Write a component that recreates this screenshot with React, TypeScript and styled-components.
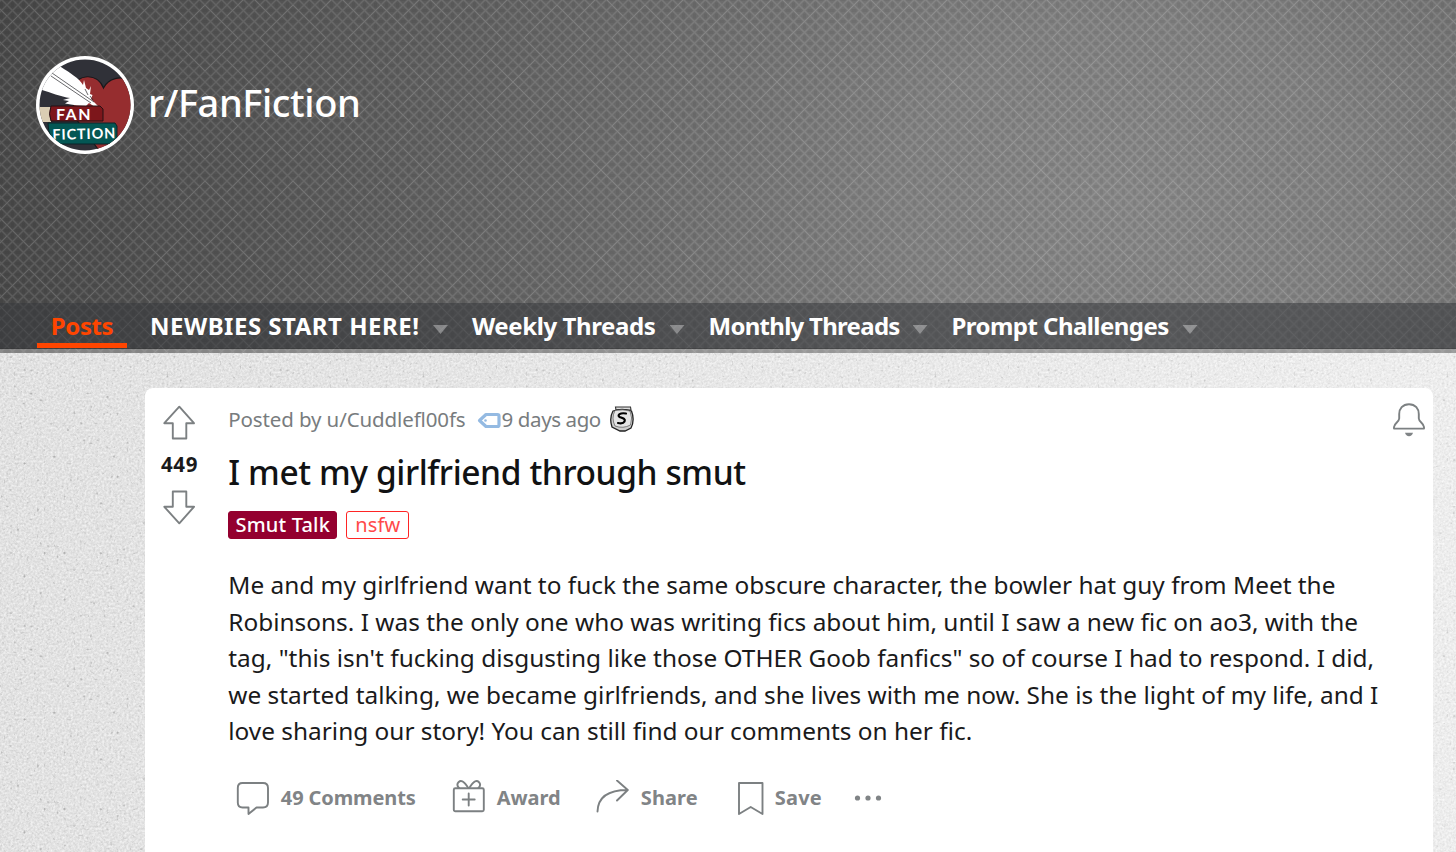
import styled, { createGlobalStyle } from 'styled-components'

const svgUrl = (svg: string) => `url("data:image/svg+xml,${encodeURIComponent(svg)}")`

const hatch = svgUrl(
  `<svg xmlns='http://www.w3.org/2000/svg' width='88' height='88'>
    <defs><pattern id='p' width='11' height='11' patternUnits='userSpaceOnUse'>
      <path d='M-1 -1L12 12M12 -1L-1 12' stroke='#fff' stroke-opacity='.1' stroke-width='1.4'/>
      <path d='M5.5 2.5V0M5.5 8.500V11M2.500 5.500H0M8.500 5.500H11' stroke='#000' stroke-opacity='.05' stroke-width='3'/>
    </pattern></defs>
    <rect width='88' height='88' fill='url(#p)'/>
    <path d='M22 22L66 66M66 22L22 66M0 33L33 0M55 88L88 55M0 55L33 88M55 0L88 33' stroke='#fff' stroke-opacity='.07'/>
  </svg>`
)

const grain = svgUrl(
  `<svg xmlns='http://www.w3.org/2000/svg' width='256' height='256'>
    <filter id='n' x='0' y='0' width='100%' height='100%' color-interpolation-filters='sRGB'>
      <feTurbulence type='fractalNoise' baseFrequency='.45' numOctaves='2' stitchTiles='stitch'/>
      <feColorMatrix values='.2 0 0 0 .8 .2 0 0 0 .8 .2 0 0 0 .8 0 0 0 0 1'/>
    </filter>
    <filter id='d' x='0' y='0' width='100%' height='100%' color-interpolation-filters='sRGB'>
      <feTurbulence type='fractalNoise' baseFrequency='.3' numOctaves='1' seed='7' stitchTiles='stitch'/>
      <feColorMatrix values='0 0 0 0 .5 0 0 0 0 .5 0 0 0 0 .5 0 6 0 0 -4'/>
    </filter>
    <rect width='256' height='256' filter='url(#n)'/>
    <rect width='256' height='256' filter='url(#d)' opacity='.5'/>
  </svg>`
)

const GlobalStyle = createGlobalStyle`
  * { box-sizing: border-box; }
  body {
    margin: 0;
    overflow: hidden;
    font-family: 'Noto Sans', sans-serif;
  }
  svg { display: block; flex: none; }
`

const Page = styled.div`
  height: 852px;
  overflow: hidden;
  display: flex;
  flex-direction: column;
  background: linear-gradient(
      100deg,
      rgba(0, 0, 0, 0.02),
      rgba(255, 255, 255, 0.3) 90%
    ),
    ${grain};
`

const Header = styled.header`
  height: 353px;
  flex: none;
  display: flex;
  flex-direction: column;
  background: ${hatch} 29px 38px,
    radial-gradient(
      1180px 900px at 1130px 200px,
      #858585 0%,
      #7e7e7e 20%,
      #696969 45%,
      #545454 75%,
      #464646 100%
    );
`

const Banner = styled.div`
  height: 303px;
  display: flex;
  align-items: flex-start;
  gap: 14px;
  padding: 56px 36px 0;
`

const Community = styled.h1`
  margin: 0;
  padding-top: 21px;
  color: #fff;
  font-size: 38px;
  font-weight: 500;
  line-height: 50px;
  letter-spacing: -0.4px;
`

const Nav = styled.nav`
  height: 46px;
  display: flex;
  padding-left: 37px;
  background: rgba(55, 57, 60, 0.56);
  border-bottom: 1px solid rgba(50, 50, 50, 0.35);
`

const Strip = styled.div`
  height: 4px;
  background: rgba(190, 190, 190, 0.5);
`

const Tab = styled.a`
  width: 90px;
  height: 45px;
  border-bottom: 5px solid #ff4500;
  color: #ff4500;
  font-size: 24px;
  font-weight: 700;
  line-height: 45px;
  text-align: center;
  letter-spacing: -0.4px;
`

const MenuItem = styled.a<{ $width: number; $spacing: number }>`
  width: ${({ $width }) => $width}px;
  display: flex;
  justify-content: space-between;
  margin-left: 24px;
  color: #fff;
  font-size: 24px;
  font-weight: 700;
  line-height: 45px;
  letter-spacing: ${({ $spacing }) => $spacing}px;
  white-space: nowrap;

  ${Tab} + & {
    margin-left: 23px;
  }
`

const Caret = styled.span`
  width: 15px;
  height: 9px;
  margin-top: 22px;
  background: rgba(255, 255, 255, 0.34);
  clip-path: polygon(0 0, 100% 0, 50% 100%);
`

const Card = styled.article`
  flex: 1;
  display: flex;
  margin: 35px 23px 0 145px;
  background: #fff;
  border-radius: 8px 8px 0 0;
`

const Votes = styled.div`
  width: 68px;
  display: flex;
  flex-direction: column;
  align-items: center;
  padding-top: 17px;
`

const Score = styled.span`
  color: #1a1a1b;
  font-size: 20.5px;
  font-weight: 700;
  line-height: 28px;
  letter-spacing: 0.6px;
  padding-left: 1px;
  margin: 10px 0 12px;
`

const Content = styled.div`
  flex: 1;
  padding: 15px 7px 0 15.3px;
`

const Meta = styled.div`
  height: 32px;
  display: flex;
  color: #787c7e;
  font-size: 20.5px;
  line-height: 32px;
  letter-spacing: -0.12px;
`

const Age = styled.span`
  letter-spacing: -0.4px;
`

const TagIcon = styled.svg`
  margin: 9px 1px 0 11px;
`

const SnooIcon = styled.svg`
  margin: 3px 0 0 9px;
`

const BellIcon = styled.svg`
  margin-left: auto;
`

const Title = styled.h2`
  margin: 17px 0 19px;
  color: #111213;
  font-size: 33.5px;
  font-weight: 500;
  line-height: 40px;
  letter-spacing: -0.4px;
`

const Flairs = styled.div`
  display: flex;
  gap: 9px;
`

const Flair = styled.span<{ $outlined?: boolean }>`
  width: ${({ $outlined }) => ($outlined ? 63 : 109)}px;
  height: 27.5px;
  border: 1.5px solid ${({ $outlined }) => ($outlined ? '#ff2424' : '#94002f')};
  border-radius: 3px;
  background: ${({ $outlined }) => ($outlined ? '#fff' : '#94002f')};
  color: ${({ $outlined }) => ($outlined ? '#ff4a4a' : '#fff')};
  font-size: 20px;
  font-weight: ${({ $outlined }) => ($outlined ? 400 : 500)};
  line-height: 25px;
  text-align: center;
  letter-spacing: ${({ $outlined }) => ($outlined ? 0.1 : 0.15)}px;
`

const Body = styled.p`
  margin: 28.5px 0 30.5px;
  color: #1a1a1b;
  font-size: 24.4px;
  line-height: 36.6px;
  white-space: nowrap;
`

const Actions = styled.div`
  display: flex;
  height: 38px;
  padding-left: 7.5px;
  color: #818486;
`

const Action = styled.button<{ $width: number; $gap: number; $spacing?: number }>`
  width: ${({ $width }) => $width}px;
  display: flex;
  gap: ${({ $gap }) => $gap}px;
  padding: 0;
  border: 0;
  background: none;
  color: inherit;
  font: 700 20px/36px 'Noto Sans', sans-serif;
  letter-spacing: ${({ $spacing = 0 }) => $spacing}px;
  white-space: nowrap;
`

const menus = [
  { text: 'NEWBIES START HERE!', width: 298, spacing: 0.5 },
  { text: 'Weekly Threads', width: 212.5, spacing: -0.4 },
  { text: 'Monthly Threads', width: 219, spacing: -0.72 },
  { text: 'Prompt Challenges', width: 246, spacing: -0.55 }
]

const lines = [
  'Me and my girlfriend want to fuck the same obscure character, the bowler hat guy from Meet the',
  'Robinsons. I was the only one who was writing fics about him, until I saw a new fic on ao3, with the',
  `tag, "this isn't fucking disgusting like those OTHER Goob fanfics" so of course I had to respond. I did,`,
  'we started talking, we became girlfriends, and she lives with me now. She is the light of my life, and I',
  'love sharing our story! You can still find our comments on her fic.'
]

const stroke = {
  fill: 'none',
  stroke: '#7c8082',
  strokeWidth: 1.9,
  strokeLinejoin: 'round' as const,
  strokeLinecap: 'round' as const
}

const Avatar = () => (
  <svg width='98' height='98' viewBox='0 0 98 98'>
    <defs>
      <clipPath id='avatar'>
        <circle cx='49' cy='49' r='45.500' />
      </clipPath>
    </defs>
    <circle cx='49' cy='49' r='49' fill='#fff' />
    <g clipPath='url(#avatar)'>
      <rect width='98' height='98' fill='#303138' />
      <path
        d='M36 32C41 18 61 16 67.5 32C72 23 84 18 98 26V66C88 80 76 84 64 96L38 60Z'
        fill='#962d2f'
        stroke='#18181b'
        strokeWidth='1.2'
      />
      <path
        d='M0 34L4 0L25 11C34 17 43 22 47 29L48 24L50 32L53 34L55 30L54 38L56.500 39L55 43L62 50L59 51L53 47L50 50L41 49.500L29 47.500L33 45L27 44L34 42C25 41 14 36 6 34Z'
        fill='#fff'
      />
      <path
        d='M16 17L58 46M15 20L55 47M49 33L52 39M54 40L57 44'
        fill='none'
        stroke='#28282c'
        strokeWidth='.7'
      />
      <path d='M2 51H15V66H4Z' fill='#dacdb3' />
      <path d='M15 50H64L67 53V65H15Q12 58 15 50Z' fill='#7d161b' stroke='#251014' />
      <path d='M12 67H79L81 70V85L78 88H22Q12 82 12 67Z' fill='#045754' stroke='#0a2528' />
      <g fill='#fff' fontFamily='Lato, sans-serif' fontWeight='700'>
        <text x='20' y='64' fontSize='16' letterSpacing='1.5'>
          FAN
        </text>
        <text x='16.500' y='83' fontSize='14.500' textLength='63' transform='rotate(-1.500 48 83)'>
          FICTION
        </text>
      </g>
    </g>
  </svg>
)

const VoteArrow = ({ down }: { down?: boolean }) => (
  <svg width='34' height='35' viewBox='0 0 34 35'>
    <path
      {...stroke}
      d='M17.300 1.700L32 18.200H24.300V33.500H10.800V18.200H2.300Z'
      transform={down ? 'matrix(1 0 0 -1 0 35)' : undefined}
    />
  </svg>
)

export default function App() {
  return (
    <Page>
      <GlobalStyle />
      <Header>
        <Banner>
          <Avatar />
          <Community>r/FanFiction</Community>
        </Banner>
        <Nav>
          <Tab>Posts</Tab>
          {menus.map(({ text, width, spacing }) => (
            <MenuItem key={text} $width={width} $spacing={spacing}>
              {text}
              <Caret />
            </MenuItem>
          ))}
        </Nav>
        <Strip />
      </Header>
      <Card>
        <Votes>
          <VoteArrow />
          <Score>449</Score>
          <VoteArrow down />
        </Votes>
        <Content>
          <Meta>
            <span>Posted by u/Cuddlefl00fs</span>
            <TagIcon width='24' height='17' viewBox='0 0 24 17'>
              <path
                d='M2.500 8.500L9 2.500H20.500Q22 2.500 22 4V13Q22 14.500 20.500 14.500H9Z'
                fill='#fff'
                stroke='#94bae2'
                strokeWidth='3.200'
                strokeLinejoin='round'
              />
              <circle cx='8.500' cy='8.500' r='1.300' fill='#94bae2' />
            </TagIcon>
            <Age>9 days ago</Age>
            <SnooIcon width='24' height='26' viewBox='0 0 24 26'>
              <path d='M5.500 1H20.500L21 4H6Z' fill='#ddd' stroke='#333' strokeWidth='1.100' />
              <path
                d='M3 5Q12 2 21.500 5Q25 14 21 22L15 25H10L2 21Q-1 12 3 5Z'
                fill='#cfcfcf'
                stroke='#222'
                strokeWidth='1.300'
              />
              <path
                d='M5 4.500Q13 3 20 5Q23 12 20.500 19Q13 23 5 20Q1 12 5 4.500Z'
                fill='#e4e4e4'
                stroke='#555'
                strokeWidth='.7'
              />
              <path
                d='M16 7.500C10 6.500 7 9 9.500 11C12 12 16 12.500 14.500 15.500C13.500 17.500 10.500 17.500 8 17'
                fill='none'
                stroke='#000'
                strokeWidth='2.200'
                strokeLinecap='round'
              />
            </SnooIcon>
            <BellIcon width='34' height='34' viewBox='0 0 34 34'>
              <path
                {...stroke}
                d='M17 1.200C10.500 1.200 7.200 6 7.200 11V15.500C7 19 2.500 20 2 24V25.600H32V24C31.500 20 27 19 26.800 15.500V11C26.800 6 23.500 1.200 17 1.200Z'
              />
              <path d='M13 29.800H21Q20 33.200 17 33.200Q14 33.200 13 29.800Z' fill='#808486' />
            </BellIcon>
          </Meta>
          <Title>I met my girlfriend through smut</Title>
          <Flairs>
            <Flair>Smut Talk</Flair>
            <Flair $outlined>nsfw</Flair>
          </Flairs>
          <Body>
            {lines.map((line) => (
              <span key={line}>
                {line}
                <br />
              </span>
            ))}
          </Body>
          <Actions>
            <Action $width={216} $gap={12} $spacing={-0.1}>
              <svg width='33' height='36' viewBox='0 0 33 36'>
                <path
                  {...stroke}
                  d='M6.500 3H27Q32 3 32 8V22.500Q32 27.500 27 27.500H20.500L12.500 34V27.500H6.500Q1.800 27.500 1.800 22.500V8Q1.800 3 6.500 3Z'
                />
              </svg>
              49 Comments
            </Action>
            <Action $width={144} $gap={12} $spacing={-0.1}>
              <svg width='33' height='36' viewBox='0 0 33 36'>
                <rect {...stroke} x='1.800' y='8.200' width='30' height='23' rx='1.500' />
                <path
                  {...stroke}
                  d='M7 8C3 3.500 8 -1 12 2.500C15 5 15.500 8 16.700 8C18 8 18.500 5 21.500 2.500C25.500 -1 30.500 3.500 26.500 8M16.700 13.500V25.500M10.700 19.500H22.700'
                />
              </svg>
              Award
            </Action>
            <Action $width={141} $gap={12} $spacing={0.1}>
              <svg width='33' height='36' viewBox='0 0 33 36'>
                <path {...stroke} d='M1.500 31.500C2 17 13 10 31.500 10M21 .5L31.800 10L21 20.500' />
              </svg>
              Share
            </Action>
            <Action $width={116} $gap={11} $spacing={0.2}>
              <svg width='27' height='36' viewBox='0 0 27 36'>
                <path {...stroke} d='M2 3H25.500V34L13.700 27L2 34Z' />
              </svg>
              Save
            </Action>
            <svg width='30' height='36' viewBox='0 0 30 36' fill='#808486'>
              <circle cx='4.500' cy='18' r='2.600' />
              <circle cx='15' cy='18' r='2.600' />
              <circle cx='25.500' cy='18' r='2.600' />
            </svg>
          </Actions>
        </Content>
      </Card>
    </Page>
  )
}
